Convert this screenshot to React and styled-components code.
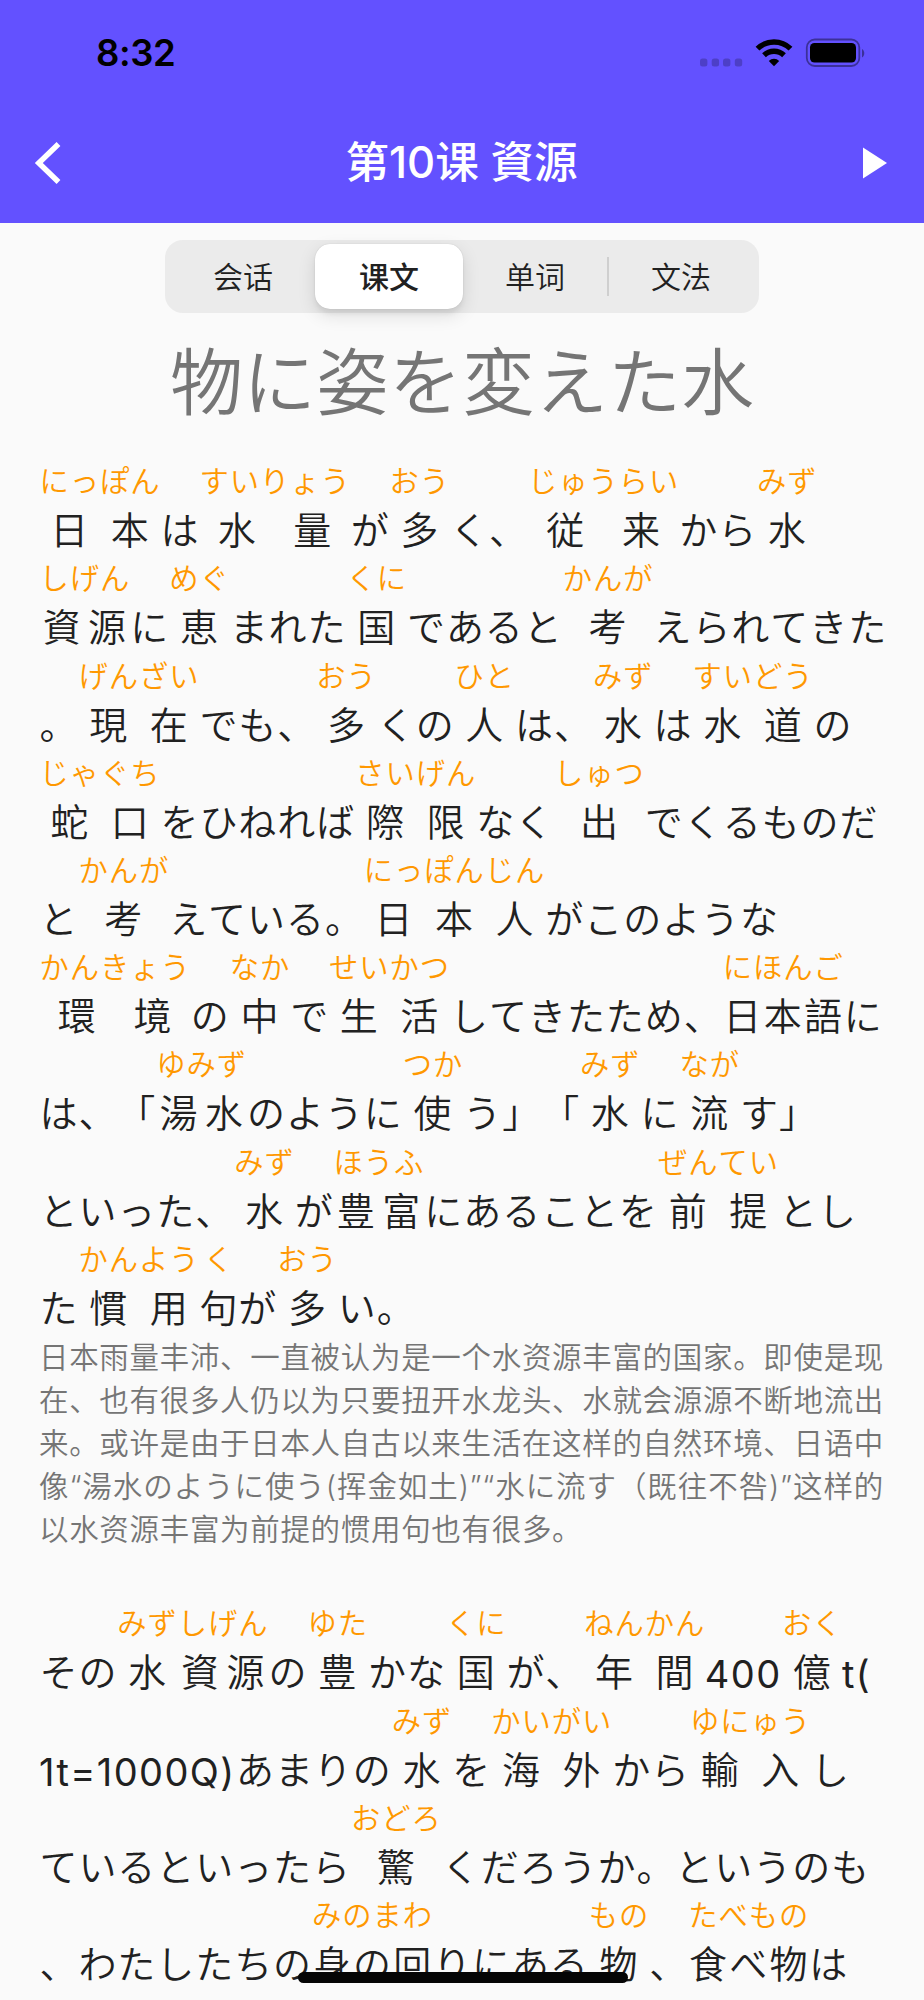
import React from "react";
import styled, { createGlobalStyle } from "styled-components";

const GlobalStyle = createGlobalStyle`
  body {
    margin: 0;
    background: #fafafa;
  }
`;

const Screen = styled.div`
  position: relative;
  display: flex;
  flex-direction: column;
  width: 924px;
  height: 2000px;
  overflow: hidden;
  background: #fafafa;
  color: #212121;
  font-family: Inter, "Noto Sans CJK SC", sans-serif;
`;

const Header = styled.header`
  flex: none;
  height: 222.5px;
  background: #6351ff;
`;

const StatusBar = styled.div`
  display: flex;
  align-items: center;
  justify-content: space-between;
  height: 105px;
  padding: 0 59px 0 96px;
  color: #000;
`;

const Time = styled.div`
  font-size: 36.5px;
  font-weight: 600;
  line-height: 44px;
  letter-spacing: -0.4px;
`;

const StatusIcons = styled.svg`
  display: block;
  width: 170px;
  height: 40px;
`;

const NavBar = styled.div`
  display: flex;
  align-items: center;
  justify-content: space-between;
  height: 115px;
  padding: 0 35px 0 34px;
`;

const Title = styled.h1`
  margin: 0;
  color: #fff;
  font-size: 43.6px;
  font-weight: 500;
  line-height: 60px;
`;

const NavIcon = styled.svg`
  display: block;
  width: 28px;
  height: 46px;
`;

const Segments = styled.div`
  flex: none;
  display: grid;
  grid-template-columns: repeat(4, 1fr);
  box-sizing: border-box;
  width: 594px;
  height: 73px;
  margin: 17.5px auto 0;
  padding: 4px 5px;
  border-radius: 18px;
  background: #ebebeb;
`;

const Segment = styled.div`
  display: flex;
  align-items: center;
  justify-content: center;
  margin: 0 -1px;
  border-radius: 15px;
  font-size: 30px;
  line-height: 44px;
  font-weight: ${(p) => (p.$active ? 500 : 350)};
  background: ${(p) => (p.$active ? "#fff" : "transparent")};
  box-shadow: ${(p) => (p.$active ? "0 6px 18px rgba(0, 0, 0, 0.12), 0 5px 4px rgba(0, 0, 0, 0.05), 0 0 1px rgba(0, 0, 0, 0.2)" : "none")};
`;

const Divided = styled(Segment)`
  position: relative;

  &::before {
    content: "";
    position: absolute;
    left: 0;
    top: 13px;
    width: 2px;
    height: 39px;
    background: #cfcfcf;
  }
`;

const Heading = styled.h2`
  flex: none;
  margin: 18px 0 26px;
  color: #757575;
  font-size: 73px;
  font-weight: 350;
  line-height: 104px;
  text-align: center;
  white-space: nowrap;
`;

const Paragraph = styled.section`
  flex: none;
  margin-left: 39px;
`;

const Line = styled.div`
  display: flex;
  align-items: flex-end;
  height: 97.2px;
  white-space: nowrap;
`;

const Plain = styled.span`
  display: flex;
  font-size: 38px;
  font-weight: 350;
  line-height: 56px;
`;

const Char = styled.span`
  flex: none;
  width: 38.95px;
  text-align: center;
`;

const Latin = styled.span`
  font-size: 38px;
  font-weight: 400;
  line-height: 51px;
  letter-spacing: 1.4px;
`;

const Word = styled.span`
  display: flex;
  flex-direction: column;
  align-items: center;
`;

const Reading = styled.span`
  display: flex;
  color: #ff9800;
  font-size: 29.3px;
  font-weight: 350;
  line-height: 41px;
`;

const Kana = styled.span`
  width: 30.25px;
  text-align: center;
`;

const Base = styled(Plain)`
  align-self: stretch;
  justify-content: space-around;
`;

const Translation = styled.div`
  flex: none;
  width: 845px;
  margin: 0 0 52px 39px;
  color: #757575;
  font-size: 29.5px;
  font-weight: 350;
  line-height: 43.1px;
  letter-spacing: 0.68px;
  white-space: nowrap;
`;

const TranslationLine = styled.div`
  text-align: justify;
  text-align-last: justify;

  &:last-child {
    text-align-last: left;
  }
`;

const HomeIndicator = styled.div`
  position: absolute;
  left: 298px;
  bottom: 17.5px;
  width: 330px;
  height: 11px;
  border-radius: 6px;
  background: #050505;
`;

const tabs = ["会话", "课文", "单词", "文法"];

// a string is plain text, a pair is [word, reading]
const first = [
  [["日本", "にっぽん"], "は", ["水量", "すいりょう"], "が", ["多", "おう"], "く、", ["従来", "じゅうらい"], "から", ["水", "みず"]],
  [["資源", "しげん"], "に", ["恵", "めぐ"], "まれた", ["国", "くに"], "であると", ["考", "かんが"], "えられてきた"],
  ["。", ["現在", "げんざい"], "でも、", ["多", "おう"], "くの", ["人", "ひと"], "は、", ["水", "みず"], "は", ["水道", "すいどう"], "の"],
  [["蛇口", "じゃぐち"], "をひねれば", ["際限", "さいげん"], "なく", ["出", "しゅつ"], "でくるものだ"],
  ["と", ["考", "かんが"], "えている。", ["日本", "にっぽん"], ["人", "じん"], "がこのような"],
  [["環境", "かんきょう"], "の", ["中", "なか"], "で", ["生活", "せいかつ"], "してきたため、", ["日本語", "にほんご"], "に"],
  ["は、「", ["湯水", "ゆみず"], "のように", ["使", "つか"], "う」「", ["水", "みず"], "に", ["流", "なが"], "す」"],
  ["といった、", ["水", "みず"], "が", ["豊富", "ほうふ"], "にあることを", ["前提", "ぜんてい"], "とし"],
  ["た", ["慣用", "かんよう"], ["句", "く"], "が", ["多", "おう"], "い。"],
];

const second = [
  ["その", ["水", "みず"], ["資源", "しげん"], "の", ["豊", "ゆた"], "かな", ["国", "くに"], "が、", ["年間", "ねんかん"], "400", ["億", "おく"], "t("],
  ["1t=1000Q)", "あまりの", ["水", "みず"], "を", ["海外", "かいがい"], "から", ["輸入", "ゆにゅう"], "し"],
  ["ているといったら", ["驚", "おどろ"], "くだろうか。というのも"],
  ["、わたしたちの", ["身の回", "みのまわ"], "りにある", ["物", "もの"], "、", ["食べ物", "たべもの"], "は"],
];

const translation = [
  "日本雨量丰沛、一直被认为是一个水资源丰富的国家。即使是现",
  "在、也有很多人仍以为只要扭开水龙头、水就会源源不断地流出",
  "来。或许是由于日本人自古以来生活在这样的自然环境、日语中",
  "像“湯水のように使う(挥金如土)”“水に流す（既往不咎)”这样的",
  "以水资源丰富为前提的惯用句也有很多。",
];

const chars = (text) => [...text].map((c, i) => <Char key={i}>{c}</Char>);

const Part = ({ part }) => {
  if (Array.isArray(part)) {
    return (
      <Word>
        <Reading>
          {[...part[1]].map((k, i) => (
            <Kana key={i}>{k}</Kana>
          ))}
        </Reading>
        <Base>{chars(part[0])}</Base>
      </Word>
    );
  }
  if (/^[\x20-\x7e]+$/.test(part)) return <Latin>{part}</Latin>;
  return <Plain>{chars(part)}</Plain>;
};

const Passage = ({ lines }) => (
  <Paragraph>
    {lines.map((line, i) => (
      <Line key={i}>
        {line.map((part, j) => (
          <Part key={j} part={part} />
        ))}
      </Line>
    ))}
  </Paragraph>
);

const App = () => (
  <Screen>
    <GlobalStyle />
    <Header>
      <StatusBar>
        <Time>8:32</Time>
        <StatusIcons viewBox="0 0 170 40">
          <g fill="#000" fillOpacity="0.22">
            <rect x="5" y="25.5" width="7.4" height="8" rx="2.5" />
            <rect x="16.7" y="25.5" width="7.4" height="8" rx="2.5" />
            <rect x="28" y="25.5" width="7.4" height="8" rx="2.5" />
            <rect x="39.8" y="25.5" width="7.4" height="8" rx="2.5" />
          </g>
          <g fill="none" stroke="#000" strokeWidth="5.4">
            <path d="M62.5 15.7A23.5 23.5 0 0 1 95.5 15.7" />
            <path d="M69 22.2A14.5 14.5 0 0 1 89 22.2" />
          </g>
          <path d="M79 33.2L73.8 28A7.3 7.3 0 0 1 84.2 28Z" />
          <rect x="111.8" y="6.5" width="52.5" height="26.5" rx="8" fill="none" stroke="#000" strokeOpacity="0.4" strokeWidth="1.8" />
          <rect x="115" y="10" width="46" height="19.6" rx="4.5" />
          <path d="M167 16v8.6c3-1.7 3-6.9 0-8.6z" fillOpacity="0.4" />
        </StatusIcons>
      </StatusBar>
      <NavBar>
        <NavIcon viewBox="0 0 28 46">
          <path d="M24.5 4L4.8 23L24.5 42" fill="none" stroke="#fff" strokeWidth="5.5" />
        </NavIcon>
        <Title>第10课 資源</Title>
        <NavIcon viewBox="0 0 28 46">
          <path d="M2 7.5L26 23L2 38.5Z" fill="#fff" />
        </NavIcon>
      </NavBar>
    </Header>
    <Segments>
      {tabs.map((tab, i) => {
        const Tab = i === 3 ? Divided : Segment;
        return (
          <Tab key={tab} $active={i === 1}>
            {tab}
          </Tab>
        );
      })}
    </Segments>
    <Heading>物に姿を変えた水</Heading>
    <Passage lines={first} />
    <Translation>
      {translation.map((line) => (
        <TranslationLine key={line}>{line}</TranslationLine>
      ))}
    </Translation>
    <Passage lines={second} />
    <HomeIndicator />
  </Screen>
);

export default App;
